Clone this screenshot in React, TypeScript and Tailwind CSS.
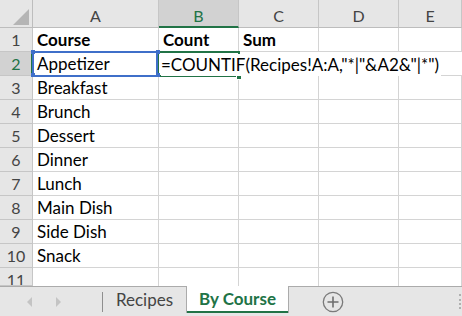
import type { ReactNode } from 'react'

const COLS = ['A', 'B', 'C', 'D', 'E']
const courses = ['Breakfast', 'Brunch', 'Dessert', 'Dinner', 'Lunch', 'Main Dish', 'Side Dish', 'Snack']
const GRID = 'grid grid-cols-[33px_126px_80px_80px_80px_1fr]'
const cell = 'h-[24px] border-r border-b border-[#d4d4d4] bg-white px-[4px] text-[17px] leading-[24px] whitespace-nowrap'

function RowHead({ n, active, short }: { n: number; active?: boolean; short?: boolean }) {
  return (
    <div
      className={
        'relative overflow-hidden border-b border-r border-b-[#c6c6c6] border-r-[#c6c6c6] text-center leading-[24px] ' +
        (short ? 'h-[18px] ' : 'h-[24px] ') +
        (active ? 'bg-[#d2d2d2] text-[#217346]' : 'bg-[#e6e6e6] text-[#444]')
      }
    >
      {n}
      {active && <span className="absolute right-[-1px] top-[-1px] h-[26px] w-[2px] bg-[#217346]" />}
    </div>
  )
}

function Row({ n, children }: { n: number; children: ReactNode }) {
  return (
    <div className={GRID}>
      <RowHead n={n} />
      {children}
    </div>
  )
}

function Handle({ className }: { className: string }) {
  return <span className={'absolute z-30 h-[4px] w-[4px] bg-[#3f6fc9] ' + className} />
}

export default function App() {
  return (
    <div className="flex h-[316px] w-[462px] flex-col overflow-hidden bg-white text-[16px] text-black [font-family:Lato,'Liberation_Sans',sans-serif]">
      {/* column headers */}
      <div className={GRID}>
        <div className="relative h-[28px] border-r border-b border-[#bdbdbd] bg-[#e6e6e6]">
          <svg className="absolute left-0 top-0" width="33" height="28" viewBox="0 0 33 28">
            <polygon points="13,25 29,25 29,9" fill="#b5b5b5" />
          </svg>
        </div>
        {COLS.map((c) => (
          <div
            key={c}
            className={
              'relative h-[28px] border-r border-b border-r-[#c6c6c6] pt-[5px] text-center leading-[22px] ' +
              (c === 'B'
                ? 'border-b-2 border-b-[#217346] bg-[#d2d2d2] text-[#217346]'
                : 'border-b-[#bdbdbd] bg-[#e6e6e6] text-[#444]')
            }
          >
            {c}
          </div>
        ))}
      </div>

      {/* row 1 */}
      <Row n={1}>
        <div className={cell + ' font-bold'}>Course</div>
        <div className={cell + ' font-bold'}>Count</div>
        <div className={cell + ' font-bold'}>Sum</div>
        <div className={cell} />
        <div className={cell} />
      </Row>

      {/* row 2: formula being edited in B2 */}
      <div className={GRID}>
        <RowHead n={2} active />
        <div className={cell + ' relative overflow-visible bg-[#e8eef9]'}>
          Appetizer
          <span className="absolute left-[-1px] top-[-1px] z-20 h-[26px] w-[126px] border-2 border-[#3f6fc9]" />
          <Handle className="left-[-2px] top-[-2px]" />
          <Handle className="right-[-2px] top-[-2px]" />
          <Handle className="bottom-[-2px] left-[-2px]" />
          <Handle className="bottom-[-2px] right-[-2px]" />
        </div>
        <div className={cell + ' relative col-span-4 overflow-visible border-r-0 pl-[2px]'}>
          <span className="absolute left-[-2px] top-[-1px] h-[26px] w-[83px] border-2 border-[#217346]" />
          <span className="absolute left-[77px] top-[22px] h-[6px] w-[6px] border border-white bg-[#217346]" />
          <span className="relative top-[1px] z-10 inline-block bg-white pr-[2px] leading-[22px]">
            =COUNTIF(Recipes!A:A,"*|"&amp;A2&amp;"|*")
          </span>
        </div>
      </div>

      {courses.map((c, i) => (
        <Row key={c} n={i + 3}>
          <div className={cell}>{c}</div>
          <div className={cell} />
          <div className={cell} />
          <div className={cell} />
          <div className={cell} />
        </Row>
      ))}

      {/* partial row 11 */}
      <div className={GRID}>
        <RowHead n={11} short />
        {COLS.map((c) => (
          <div key={c} className="h-[18px] border-r border-[#d4d4d4] bg-white" />
        ))}
      </div>

      {/* sheet tabs */}
      <div className="flex h-[30px] border-t border-[#ababab] bg-[#e6e6e6] text-[17px]">
        <div className="flex w-[103px] items-center">
          <svg className="ml-[27px]" width="6" height="10" viewBox="0 0 6 10">
            <polygon points="5,0 5,10 0,5" fill="#c4c4c4" />
          </svg>
          <svg className="ml-[22px]" width="6" height="10" viewBox="0 0 6 10">
            <polygon points="1,0 1,10 6,5" fill="#c4c4c4" />
          </svg>
          <span className="ml-auto h-[20px] w-px bg-[#8f8f8f]" />
        </div>
        <div className="w-[83px] pt-[2px] text-center leading-[22px] text-[#444]">Recipes</div>
        <div className="-mt-px flex h-[27px] w-[103px] flex-col border-x border-[#ababab] bg-white">
          <div className="flex-1 pt-[2px] text-center font-bold leading-[22px] text-[#217346]">By Course</div>
          <div className="h-[2px] bg-[#217346]" />
        </div>
        <div className="ml-[33px] flex items-center">
          <svg width="22" height="22" viewBox="0 0 22 22">
            <circle cx="11" cy="11" r="9.7" fill="none" stroke="#7a7a7a" strokeWidth="1.3" />
            <path d="M11 5.5v11M5.5 11h11" stroke="#6e6e6e" strokeWidth="1.6" />
          </svg>
        </div>
        <div className="ml-auto mr-[1px] mt-[7px] h-[15px] w-[2px] border-l-2 border-dotted border-[#b0b0b0]" />
      </div>
    </div>
  )
}
